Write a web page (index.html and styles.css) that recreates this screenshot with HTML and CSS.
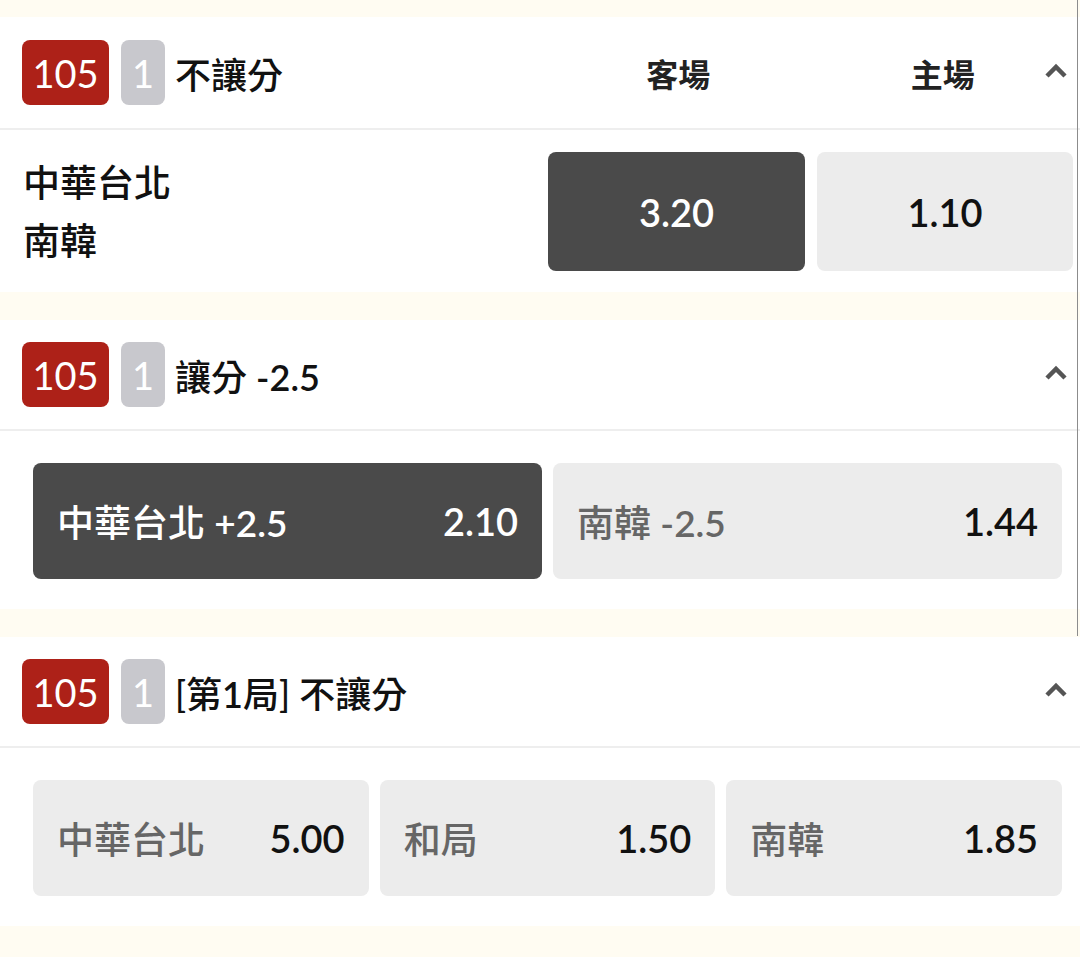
FILE: index.html
```html
<!DOCTYPE html>
<html lang="zh-Hant">
<head>
  <meta charset="UTF-8" />
  <meta name="viewport" content="width=device-width, initial-scale=1.0"/>
  <title>賽事投注</title>
  <link rel="stylesheet" href="styles.css">
</head>
<body>

<div class="market-list">

  <!-- 不讓分 -->
  <section class="market">
    <div class="market-head">
      <span class="badge badge-code">105</span>
      <span class="badge badge-num">1</span>
      <span class="market-title">不讓分</span>
      <div class="col-labels">
        <span>客場</span>
        <span>主場</span>
      </div>
      <svg class="chevron" width="24" height="16" viewBox="0 0 24 16"><polyline points="3,13 12,4 21,13" fill="none" stroke="#555" stroke-width="4.5"/></svg>
    </div>
    <div class="market-body moneyline">
      <div class="teams">
        <div>中華台北</div>
        <div>南韓</div>
      </div>
      <div class="odds-pair">
        <button class="odd selected"><span class="odd-val">3.20</span></button>
        <button class="odd"><span class="odd-val">1.10</span></button>
      </div>
    </div>
  </section>

  <!-- 讓分 -->
  <section class="market">
    <div class="market-head">
      <span class="badge badge-code">105</span>
      <span class="badge badge-num">1</span>
      <span class="market-title">讓分 <b>-2.5</b></span>
      <svg class="chevron" width="24" height="16" viewBox="0 0 24 16"><polyline points="3,13 12,4 21,13" fill="none" stroke="#555" stroke-width="4.5"/></svg>
    </div>
    <div class="market-body odds-row cols-2">
      <button class="odd selected"><span class="odd-name">中華台北 <b>+2.5</b></span><span class="odd-val">2.10</span></button>
      <button class="odd"><span class="odd-name">南韓 <b>-2.5</b></span><span class="odd-val">1.44</span></button>
    </div>
  </section>

  <!-- 第1局 -->
  <section class="market">
    <div class="market-head">
      <span class="badge badge-code">105</span>
      <span class="badge badge-num">1</span>
      <span class="market-title">[第<b>1</b>局] 不讓分</span>
      <svg class="chevron" width="24" height="16" viewBox="0 0 24 16"><polyline points="3,13 12,4 21,13" fill="none" stroke="#555" stroke-width="4.5"/></svg>
    </div>
    <div class="market-body odds-row cols-3">
      <button class="odd"><span class="odd-name">中華台北</span><span class="odd-val">5.00</span></button>
      <button class="odd"><span class="odd-name">和局</span><span class="odd-val">1.50</span></button>
      <button class="odd"><span class="odd-name">南韓</span><span class="odd-val">1.85</span></button>
    </div>
  </section>

</div>

</body>
</html>
```

FILE: styles.css
```css
body {
  font-family: Lato, "Noto Sans CJK TC", sans-serif;
  background: #fffcf2;
  color: #111;
  margin: 0;
  padding: 0;
  position: relative;
  height: 957px;
  overflow: hidden;
}
body::after {
  content: "";
  position: absolute;
  top: 0;
  right: 2px;
  width: 1px;
  height: 636px;
  background: #8c8c8c;
}
.market-list {
  padding-top: 17px;
}
.market {
  background: #fff;
  margin-bottom: 28px;
}
.market-head {
  position: relative;
  display: flex;
  align-items: center;
  height: 109px;
  padding-left: 22px;
  border-bottom: 2px solid #eeeeee;
}
.market:first-child .market-head {
  height: 111px;
}
.badge {
  display: flex;
  align-items: center;
  justify-content: center;
  height: 65px;
  border-radius: 8px;
  color: #fff;
  font-size: 38px;
  margin-right: 12px;
}
.badge-code {
  width: 87px;
  background: #ad2118;
}
.badge-num {
  width: 44px;
  background: #c8c8cd;
}
.market-title {
  flex: 1;
  font-size: 36px;
  font-weight: 500;
  color: #111;
  margin-left: -2px;
}
.market-title b,
.odd-name b {
  font-weight: 600;
}
.col-labels {
  display: flex;
  width: 525px;
  margin-right: 7px;
  font-size: 32px;
  font-weight: 700;
  color: #222;
}
.col-labels span {
  flex: 1;
  text-align: center;
}
.col-labels span:first-child {
  padding-right: 4px;
}
.chevron {
  position: absolute;
  right: 12px;
  top: 50%;
  margin-top: -10px;
}
.market-body {
  padding: 32px 18px 30px 33px;
}
.moneyline {
  display: flex;
  align-items: center;
  padding: 22px 7px 21px 23px;
}
.teams {
  flex: 1;
  font-size: 37px;
  font-weight: 500;
  line-height: 58px;
  color: #111;
}
.odds-pair {
  display: grid;
  grid-template-columns: 257px 256px;
  gap: 12px;
}
.odds-pair .odd {
  height: 119px;
  justify-content: center;
}
.odds-row {
  display: grid;
  gap: 11px;
}
.cols-2 {
  grid-template-columns: 1fr 1fr;
}
.cols-3 {
  grid-template-columns: 1fr 1fr 1fr;
}
.odd {
  display: flex;
  align-items: center;
  justify-content: space-between;
  height: 116px;
  padding: 0 24px;
  background: #ececec;
  border: none;
  border-radius: 8px;
  font-family: inherit;
  cursor: pointer;
}
.odd-name {
  font-size: 37px;
  font-weight: 500;
  color: #666;
}
.odd-val {
  font-size: 38px;
  font-weight: 600;
  color: #111;
}
.odd.selected {
  background: #4a4a4a;
}
.odd.selected .odd-name,
.odd.selected .odd-val {
  color: #fff;
}
```
